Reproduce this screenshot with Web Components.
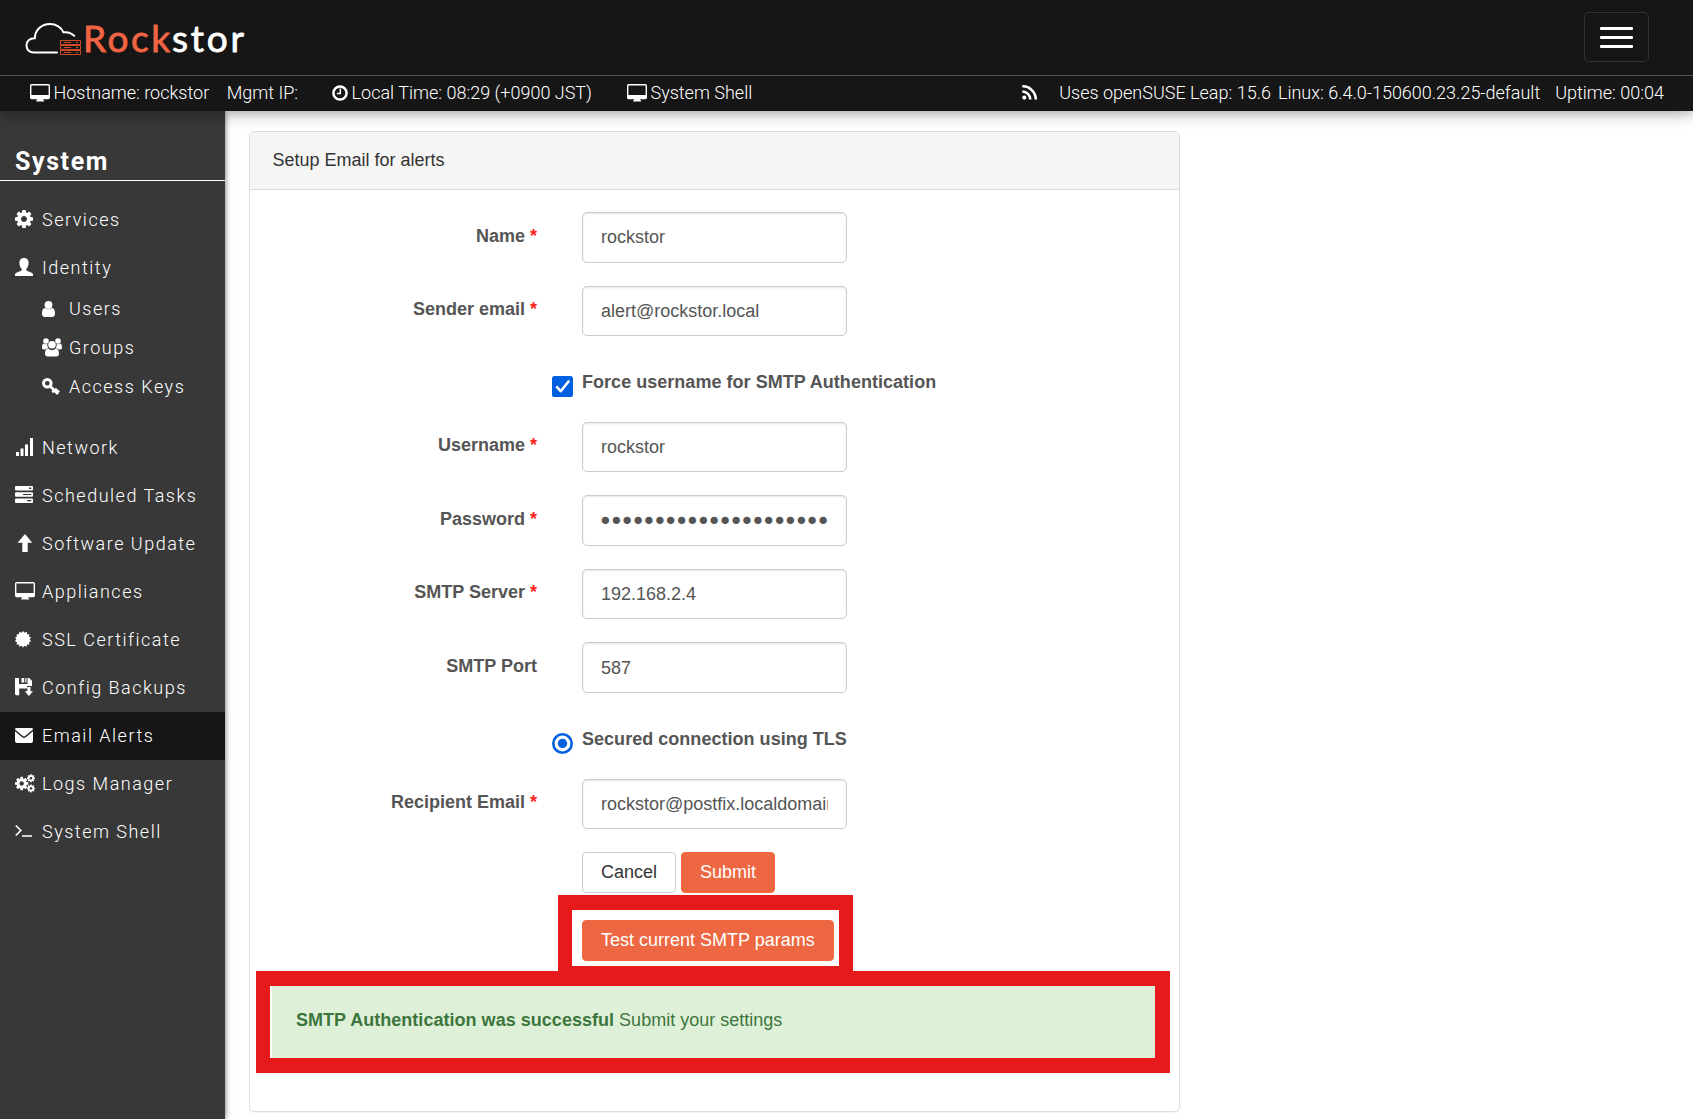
<!DOCTYPE html>
<html lang="en">
<head>
<meta charset="utf-8">
<title>Rockstor - Email Alerts</title>
<style>
  body {
    margin: 0;
    background: #fff;
    font-family: "Liberation Sans", Arial, sans-serif;
    font-size: 18px;
    color: #333;
  }
</style>
</head>
<body>
<rs-app></rs-app>

<script>
//icon name -> [width, height, svg content]
const COG = 'M1152 896q0-106-75-181t-181-75-181 75-75 181 75 181 181 75 181-75 75-181zm512-109v222q0 12-8 23t-20 13l-185 28q-19 54-39 91 35 50 107 138 10 12 10 25t-9 23q-27 37-99 108t-94 71q-12 0-26-9l-138-108q-44 23-91 38-16 136-29 186-7 28-36 28h-222q-14 0-24.5-8.5t-11.5-21.5l-28-184q-49-16-90-37l-141 107q-10 9-25 9-14 0-25-11-126-114-165-168-7-10-7-23 0-12 8-23 15-21 51-66.5t54-70.5q-27-50-41-99l-183-27q-13-2-21-12.5t-8-23.5v-222q0-12 8-23t19-13l186-28q14-46 39-92-40-57-107-138-10-12-10-24 0-10 9-23 26-36 98.5-107.5t94.5-71.5q13 0 26 10l138 107q44-23 91-38 16-136 29-186 7-28 36-28h222q14 0 24.5 8.5t11.5 21.5l28 184q49 16 90 37l142-107q9-9 24-9 13 0 25 10 129 119 165 170 7 8 7 22 0 12-8 23-15 21-51 66.5t-54 70.5q26 50 41 98l183 28q13 2 21 12.5t8 23.5z';

//points of a toothed disc
const burst = (cx, cy, outer, inner, teeth) => {
  const points = [];
  for(let i = 0; i < teeth * 2; i++) {
    const r = i % 2 ? inner : outer;
    const a = Math.PI * i / teeth;
    points.push(`${(cx + r * Math.sin(a)).toFixed(2)},${(cy - r * Math.cos(a)).toFixed(2)}`);
  }
  return points.join(' ');
};

const ICONS = {
  desktop: [20, 18, '<path fill-rule="evenodd" d="M1.600 0h16.800A1.600 1.600 0 0 1 20 1.600v12a1.600 1.600 0 0 1-1.600 1.600h-5.200v1.100h.9v1.300H6.200v-1.300h.9v-1.100H1.600A1.600 1.600 0 0 1 0 13.600V1.600A1.600 1.600 0 0 1 1.600 0zM1.400 1.500v9.500h17.200V1.500z"/>'],
  time: [16, 16, '<circle cx="8" cy="8" r="6.600" fill="none" stroke="currentColor" stroke-width="2.500"/><path d="M8.300 3.600v5H4.900" fill="none" stroke="currentColor" stroke-width="1.500"/>'],
  rss: [16, 15, '<circle cx="2.300" cy="12.600" r="2.100"/><path d="M.3 6.500a8 8 0 0 1 8 8M.3 1.300a13.200 13.200 0 0 1 13.500 13.200" fill="none" stroke="currentColor" stroke-width="2.600"/>'],
  cog: [18, 18, `<path transform="scale(.01172) translate(-128 -128)" d="${COG}"/>`],
  identity: [18, 18, '<path d="M9 0c3 0 4.600 1.800 4.600 4.700 0 2.400-.8 4.800-2.200 6.100-.3.900-.1 1.700.6 2l4.500 1.900c1 .4 1.500 1 1.500 2V18H0v-1.300c0-1 .5-1.600 1.500-2L6 12.800c.7-.3.900-1.100.6-2C5.200 9.500 4.400 7.100 4.400 4.700 4.400 1.800 6 0 9 0z"/>'],
  user: [13, 16, '<circle cx="6.500" cy="4" r="3.900"/><path d="M3 6.900a4.900 4.900 0 0 0 7 0c2.400.3 3 2.700 3 5.600 0 2.200-1 3.500-2.800 3.500H2.800C1 16 0 14.700 0 12.500 0 9.600.6 7.200 3 6.900z"/>'],
  group: [20, 19, '<circle cx="4" cy="3" r="2.800"/><circle cx="16" cy="3" r="2.800"/><path d="M2 5.500a4 4 0 0 0 3.400.5 5 5 0 0 0 .9 4.200c-1.400.1-2.300.6-3 1.400H2c-1.300 0-2-.7-2-2C0 7.300.5 5.600 2 5.500zM18 5.500a4 4 0 0 1-3.400.5 5 5 0 0 1-.9 4.200c1.400.1 2.300.6 3 1.400H18c1.300 0 2-.7 2-2 0-2.300-.5-4-2-4.100z"/><circle cx="10" cy="6.800" r="3.800"/><path d="M6.300 10.600a5.200 5.200 0 0 0 7.400 0c2.300.2 3.300 2.200 3.300 5.200 0 1.800-1 2.800-2.800 2.800H5.800C4 18.600 3 17.600 3 15.800c0-3 1-5 3.300-5.200z"/>'],
  key: [18, 17, '<circle cx="5.300" cy="5.300" r="3.800" fill="none" stroke="currentColor" stroke-width="3"/><path d="M8 8l8 8M12.500 13l2.300-2.300M10.300 14.300l1.600-1.800M15 14.500l2-2" fill="none" stroke="currentColor" stroke-width="2.600"/>'],
  signal: [18, 18, '<path d="M1 14h3v4H1zM5.500 10.500h3V18h-3zM10 6.500h3V18h-3zM15 0h3v18h-3z"/>'],
  tasks: [18, 18, '<path fill-rule="evenodd" d="M1 0h16a1 1 0 0 1 1 1v2.600a1 1 0 0 1-1 1H1a1 1 0 0 1-1-1V1a1 1 0 0 1 1-1zM1 6.200h16a1 1 0 0 1 1 1v2.600a1 1 0 0 1-1 1H1a1 1 0 0 1-1-1V7.200a1 1 0 0 1 1-1zM1 12.400h16a1 1 0 0 1 1 1V16a1 1 0 0 1-1 1H1a1 1 0 0 1-1-1v-2.600a1 1 0 0 1 1-1zM14 1.600v1.400h2.300V1.600zM8 7.900v1.200h8.300V7.900zM12 14.100v1.200h4.300v-1.200z"/>'],
  up: [18, 18, '<path d="M10 0l7.200 8.800h-4.500V18H7.300V8.800H2.600z"/>'],
  certificate: [18, 17, `<polygon points="${burst(8, 8.3, 8.3, 6.6, 14)}"/>`],
  save: [18, 18, '<path d="M0 0h4v6h8.500V0h1.700L17 2.700V8h-5v2.500H4.200v6.800H1.200L0 16.200zM6.500 0h2.700v4.500H6.500zM10.300 0h1.200v4.500h-1.200zM12.300 9h3.200v4.200H18L13.900 18 9.800 13.200h2.500z"/>'],
  envelope: [18, 15, '<path d="M1.500 0h15A1.500 1.500 0 0 1 18 1.600L9.900 8.200a1.500 1.500 0 0 1-1.800 0L0 1.600A1.500 1.500 0 0 1 1.500 0z"/><path d="M0 3.200l7.300 6a2.700 2.700 0 0 0 3.400 0l7.300-6V13a2 2 0 0 1-2 2H2a2 2 0 0 1-2-2z"/>'],
  cogs: [20, 19, `<g transform="translate(0 2.800)"><path transform="scale(.0087) translate(-128 -128)" d="${COG}"/></g><g transform="translate(12 .3)"><path transform="scale(.0052) translate(-128 -128)" d="${COG}"/></g><g transform="translate(12 10.400)"><path transform="scale(.0052) translate(-128 -128)" d="${COG}"/></g>`],
  terminal: [18, 14, '<path d="M.8 1.500l5 5-5 5M7 12h10" fill="none" stroke="currentColor" stroke-width="1.700"/>']
};

class Icon extends HTMLElement {
  constructor() {
    super();
    this.attachShadow({ mode: 'open' });
  }

  connectedCallback() {
    const [w, h, content] = ICONS[this.getAttribute('name')];
    this.shadowRoot.innerHTML = `
      <style>
        :host { display: inline-flex; flex: none; align-items: center; }
        svg { display: block; fill: currentColor; }
      </style>
      <svg width="${w}" height="${h}" viewBox="0 0 ${w} ${h}">${content}</svg>`;
  }
}

class Logo extends HTMLElement {
  constructor() {
    super();
    this.attachShadow({ mode: 'open' });
    this.shadowRoot.innerHTML = `
      <style>
        :host { display: block; }
        svg { display: block; overflow: visible; }
        text { font-family: Lato, sans-serif; font-size: 37px; font-weight: 400; stroke-width: .8px; stroke-linejoin: round; }
      </style>
      <svg width="235" height="60" viewBox="0 -10 235 60">
        <g fill="none" stroke="#fff" stroke-width="2" stroke-linecap="round">
          <path d="M32 34.500H8.500C4.500 34.500 1.500 31.500 1.500 27.500c0-4.500 3.500-7.500 8.300-7.300C10 12 16.500 6 25 6c6 0 11.500 3.300 13.500 8.300 4-.6 8 .9 10.800 3.500"/>
        </g>
        <g fill="none" stroke="#ce4a2b" stroke-width="1">
          <path d="M35.500 22.500h20v4h-20zM35.500 27.500h20v4h-20zM35.500 32.500h20v4h-20zM39 24.500h7M39 29.500h7M39 34.500h7M51 24.500h2M51 29.500h2M51 34.500h2"/>
        </g>
        <text x="58" y="34" fill="#f16444" stroke="#f16444" textLength="87" lengthAdjust="spacing">Rock</text>
        <text x="147" y="34" fill="#fff" stroke="#fff" textLength="72" lengthAdjust="spacing">stor</text>
      </svg>`;
  }
}

class NavBar extends HTMLElement {
  constructor() {
    super();
    this.attachShadow({ mode: 'open' });
    this.shadowRoot.innerHTML = `
      <style>
        :host {
          display: flex;
          box-sizing: border-box;
          height: 75px;
          padding: 0 44px 0 25px;
          align-items: center;
          justify-content: space-between;
          background: #161616;
        }
        button {
          display: flex;
          flex-flow: column;
          justify-content: center;
          align-items: center;
          gap: 6px;
          width: 65px;
          height: 50px;
          margin-bottom: 1px;
          padding: 1px 0 0;
          border: 1px solid #333;
          border-radius: 5px;
          background: none;
        }
        i { width: 33px; height: 3px; border-radius: 1px; background: #fff; }
      </style>
      <rs-logo></rs-logo>
      <button aria-label="Menu"><i></i><i></i><i></i></button>`;
  }
}

class StatusBar extends HTMLElement {
  constructor() {
    super();
    this.attachShadow({ mode: 'open' });
    this.shadowRoot.innerHTML = `
      <style>
        :host {
          display: flex;
          box-sizing: border-box;
          height: 36px;
          padding: 0 29px 2px 30px;
          align-items: center;
          justify-content: space-between;
          border-top: 1px solid #505050;
          background: #161616;
          color: #fff;
          font: 300 18px Roboto, sans-serif;
          white-space: nowrap;
        }
        div, span { display: flex; align-items: center; }
        span { gap: 3.500px; }
        .ip { margin-left: 17.500px; }
        .time { margin-left: 34px; }
        .shell { margin-left: 35px; }
        .os { margin-left: 21px; }
        .kernel { margin-left: 7px; }
        .uptime { margin-left: 15px; }
      </style>
      <div>
        <span><rs-icon name="desktop"></rs-icon>Hostname: rockstor</span>
        <span class="ip">Mgmt IP:</span>
        <span class="time"><rs-icon name="time"></rs-icon>Local Time: 08:29 (+0900 JST)</span>
        <span class="shell"><rs-icon name="desktop"></rs-icon>System Shell</span>
      </div>
      <div>
        <rs-icon name="rss"></rs-icon>
        <span class="os">Uses openSUSE Leap: 15.6</span>
        <span class="kernel">Linux: 6.4.0-150600.23.25-default</span>
        <span class="uptime">Uptime: 00:04</span>
      </div>`;
  }
}

class SideItem extends HTMLElement {
  constructor() {
    super();
    this.attachShadow({ mode: 'open' });
  }

  connectedCallback() {
    this.shadowRoot.innerHTML = `
      <style>
        :host {
          display: flex;
          box-sizing: border-box;
          height: 48px;
          padding: 0 0 2px 15px;
          align-items: center;
        }
        :host([active]) { background: #161616; }
        :host([sub]) { height: 39px; padding: 0 0 0 42px; }
        .icon { display: flex; width: 27px; flex: none; }
      </style>
      <span class="icon"><rs-icon name="${this.getAttribute('icon')}"></rs-icon></span>
      <slot></slot>`;
  }
}

class SideBar extends HTMLElement {
  constructor() {
    super();
    this.attachShadow({ mode: 'open' });
    this.shadowRoot.innerHTML = `
      <style>
        :host {
          display: block;
          flex: none;
          width: 225px;
          background: #383838;
          color: #fff;
          font: 300 18px Roboto, sans-serif;
          letter-spacing: 1.500px;
          white-space: nowrap;
          box-shadow: 0 0 6px rgba(0, 0, 0, .6);
        }
        h3 {
          box-sizing: border-box;
          height: 70px;
          margin: 0 0 15px;
          padding: 34px 0 0 15px;
          border-bottom: 1px solid #fff;
          font: 700 25px/34px Roboto, sans-serif;
          letter-spacing: 1.600px;
        }
        .sub { margin: -3px 0 18px; }
      </style>
      <h3>System</h3>
      <rs-side-item icon="cog">Services</rs-side-item>
      <rs-side-item icon="identity">Identity</rs-side-item>
      <div class="sub">
        <rs-side-item sub icon="user">Users</rs-side-item>
        <rs-side-item sub icon="group">Groups</rs-side-item>
        <rs-side-item sub icon="key">Access Keys</rs-side-item>
      </div>
      <rs-side-item icon="signal">Network</rs-side-item>
      <rs-side-item icon="tasks">Scheduled Tasks</rs-side-item>
      <rs-side-item icon="up">Software Update</rs-side-item>
      <rs-side-item icon="desktop">Appliances</rs-side-item>
      <rs-side-item icon="certificate">SSL Certificate</rs-side-item>
      <rs-side-item icon="save">Config Backups</rs-side-item>
      <rs-side-item icon="envelope" active>Email Alerts</rs-side-item>
      <rs-side-item icon="cogs">Logs Manager</rs-side-item>
      <rs-side-item icon="terminal">System Shell</rs-side-item>`;
  }
}

//label on the left, text input on the right
class FormField extends HTMLElement {
  constructor() {
    super();
    this.attachShadow({ mode: 'open' });
  }

  connectedCallback() {
    this.shadowRoot.innerHTML = `
      <style>
        :host {
          display: grid;
          grid-template-columns: 264px 265px;
          column-gap: 45px;
          margin-bottom: 23px;
        }
        label {
          padding-top: 13.500px;
          line-height: 20px;
          text-align: right;
          font-weight: bold;
          color: #555;
        }
        b { color: #f22; }
        input {
          box-sizing: border-box;
          width: 100%;
          height: 50.600px;
          padding: 1px 18px 0;
          border: 1px solid #ccc;
          border-radius: 5px;
          background: #fff;
          box-shadow: inset 0 1px 2px rgba(0, 0, 0, .1);
          font: inherit;
          color: #555;
        }
        input[type=password] {
          padding: 1px 12px 0 15px;
          font: 25px "DejaVu Sans", sans-serif;
          letter-spacing: -3.860px;
        }
      </style>
      <label for="field"><slot></slot>${this.hasAttribute('required') ? ' <b>*</b>' : ''}</label>
      <input id="field" type="${this.getAttribute('type') || 'text'}" value="${this.getAttribute('value')}">`;
  }
}

//checkbox or radio with its label
class FormToggle extends HTMLElement {
  constructor() {
    super();
    this.attachShadow({ mode: 'open' });
  }

  connectedCallback() {
    const mark = this.getAttribute('type') === 'radio'
      ? '<circle cx="10.500" cy="10.500" r="9.200" fill="#fff" stroke="#0060df" stroke-width="2.600"/><circle cx="10.500" cy="10.500" r="4.700" fill="#0060df"/>'
      : '<rect width="21" height="21" rx="2.600" fill="#0060df"/><path d="M5 11.200l3.700 4L16.500 5.500" fill="none" stroke="#fff" stroke-width="2.600" stroke-linecap="round" stroke-linejoin="round"/>';
    this.shadowRoot.innerHTML = `
      <style>
        :host {
          display: flex;
          height: 62.500px;
          padding-left: 279px;
          gap: 9px;
          font-weight: bold;
          letter-spacing: .03px;
          color: #555;
        }
        svg { margin-top: 16.600px; }
        label { padding-top: 13px; line-height: 20px; }
      </style>
      <svg width="21" height="21">${mark}</svg>
      <label><slot></slot></label>`;
  }
}

class Button extends HTMLElement {
  constructor() {
    super();
    this.attachShadow({ mode: 'open' });
    this.shadowRoot.innerHTML = `
      <style>
        :host { display: inline-block; }
        button {
          height: 41px;
          padding: 0 18px;
          border: 1px solid #ccc;
          border-radius: 4px;
          background: #fff;
          font: inherit;
          color: #333;
        }
        :host([primary]) button { background: #ed6842; border-color: #f4683c; color: #fff; }
      </style>
      <button><slot></slot></button>`;
  }
}

class Panel extends HTMLElement {
  constructor() {
    super();
    this.attachShadow({ mode: 'open' });
    this.shadowRoot.innerHTML = `
      <style>
        :host {
          display: block;
          position: relative;
          box-sizing: border-box;
          width: 931px;
          height: 981px;
          border: 1px solid #ddd;
          border-radius: 5px;
          box-shadow: 0 1px 1px rgba(0, 0, 0, .05);
        }
        header {
          height: 57px;
          padding-left: 22.500px;
          border-bottom: 1px solid #ddd;
          border-radius: 4px 4px 0 0;
          background: #f5f5f5;
          line-height: 56px;
        }
        section { padding: 22px 23px; }
      </style>
      <header><slot name="title"></slot></header>
      <section><slot></slot></section>`;
  }
}

class EmailView extends HTMLElement {
  constructor() {
    super();
    this.attachShadow({ mode: 'open' });
    this.shadowRoot.innerHTML = `
      <style>
        :host { display: block; flex: 1; padding: 20px 0 0 24px; }
        .actions { display: flex; gap: 5px; padding-left: 309px; }
        .test { margin: 27px 0 23px; }
        .alert {
          height: 74px;
          margin-left: -1px;
          padding-left: 24px;
          background: #dff0d8;
          color: #3c763d;
          line-height: 72px;
        }
        strong { letter-spacing: .03px; }
        /* callouts drawn over the panel */
        .mark { position: absolute; box-sizing: border-box; border: 15px solid #e61a1a; pointer-events: none; }
        .markButton { left: 308px; top: 763px; width: 295px; height: 86px; border-width: 15px 14px; }
        .markAlert { left: 6px; top: 839px; width: 914px; height: 102px; border-left-width: 14px; }
      </style>
      <rs-panel>
        <span slot="title">Setup Email for alerts</span>
        <rs-field required value="rockstor">Name</rs-field>
        <rs-field required value="alert@rockstor.local">Sender email</rs-field>
        <rs-toggle type="checkbox">Force username for SMTP Authentication</rs-toggle>
        <rs-field required value="rockstor">Username</rs-field>
        <rs-field required type="password" value="rockstorpassword12345">Password</rs-field>
        <rs-field required value="192.168.2.4">SMTP Server</rs-field>
        <rs-field value="587">SMTP Port</rs-field>
        <rs-toggle type="radio">Secured connection using TLS</rs-toggle>
        <rs-field required value="rockstor@postfix.localdomain">Recipient Email</rs-field>
        <div class="actions">
          <rs-button>Cancel</rs-button>
          <rs-button primary>Submit</rs-button>
        </div>
        <div class="actions test">
          <rs-button primary>Test current SMTP params</rs-button>
        </div>
        <div class="alert"><strong>SMTP Authentication was successful</strong> Submit your settings</div>
        <div class="mark markButton"></div>
        <div class="mark markAlert"></div>
      </rs-panel>`;
  }
}

class App extends HTMLElement {
  constructor() {
    super();
    this.attachShadow({ mode: 'open' });
    this.shadowRoot.innerHTML = `
      <style>
        :host { display: flex; flex-flow: column; height: 100vh; overflow: hidden; }
        .top { flex: none; position: relative; z-index: 1; box-shadow: 0 2px 14px rgba(0, 0, 0, .4); }
        .main { display: flex; flex: 1 1 auto; min-height: 0; }
      </style>
      <div class="top">
        <rs-nav-bar></rs-nav-bar>
        <rs-status-bar></rs-status-bar>
      </div>
      <div class="main">
        <rs-side-bar></rs-side-bar>
        <rs-email-view></rs-email-view>
      </div>`;
  }
}

customElements.define('rs-icon', Icon);
customElements.define('rs-logo', Logo);
customElements.define('rs-nav-bar', NavBar);
customElements.define('rs-status-bar', StatusBar);
customElements.define('rs-side-item', SideItem);
customElements.define('rs-side-bar', SideBar);
customElements.define('rs-field', FormField);
customElements.define('rs-toggle', FormToggle);
customElements.define('rs-button', Button);
customElements.define('rs-panel', Panel);
customElements.define('rs-email-view', EmailView);
customElements.define('rs-app', App);
</script>
</body>
</html>
